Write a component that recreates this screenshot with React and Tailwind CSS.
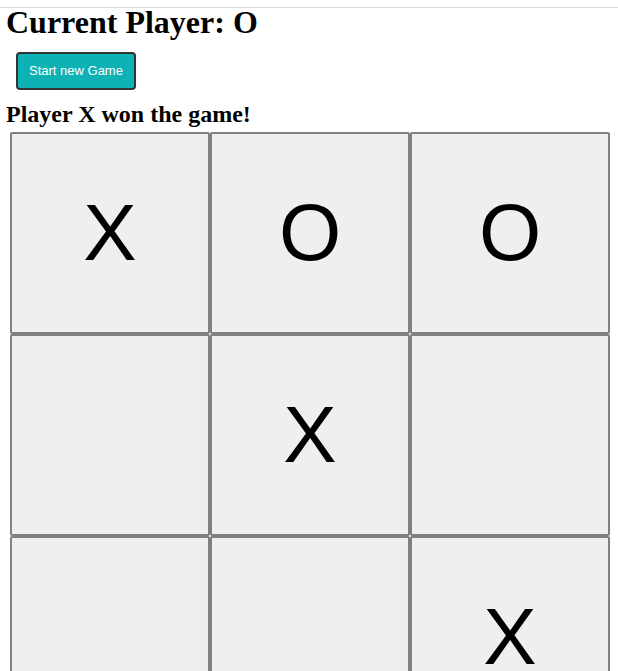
import React from "react";

const board = ["X", "O", "O", "", "X", "", "", "", "X"];

export default function App() {
  return (
    <div className="min-h-screen bg-white text-black" style={{ fontFamily: "'Liberation Serif', 'Times New Roman', serif" }}>
      <div className="h-[7px]" />
      <div className="h-px bg-[#dddddd]" />
      <div className="px-[6px]">
        <h1 className="text-[32px] font-bold leading-[28px]">Current Player: O</h1>
        <button className="mt-[16px] ml-[10px] h-[38px] px-[11px] rounded-[4px] border-2 border-[#333333] bg-[#0fb2b4] text-white text-[13px] font-['Liberation_Sans',Arial,sans-serif]">
          Start new Game
        </button>
        <h2 className="mt-[12px] text-[24px] font-bold leading-[24px]">Player X won the game!</h2>
        <div className="mt-[6px] ml-[4px] grid grid-cols-[repeat(3,200px)]">
          {board.map((v, i) => (
            <button
              key={i}
              className="h-[202px] w-[200px] rounded-[2px] border-2 border-[#808080] bg-[#efefef] text-[80px] leading-none text-black font-['Liberation_Sans',Arial,sans-serif]"
            >
              {v}
            </button>
          ))}
        </div>
      </div>
    </div>
  );
}
